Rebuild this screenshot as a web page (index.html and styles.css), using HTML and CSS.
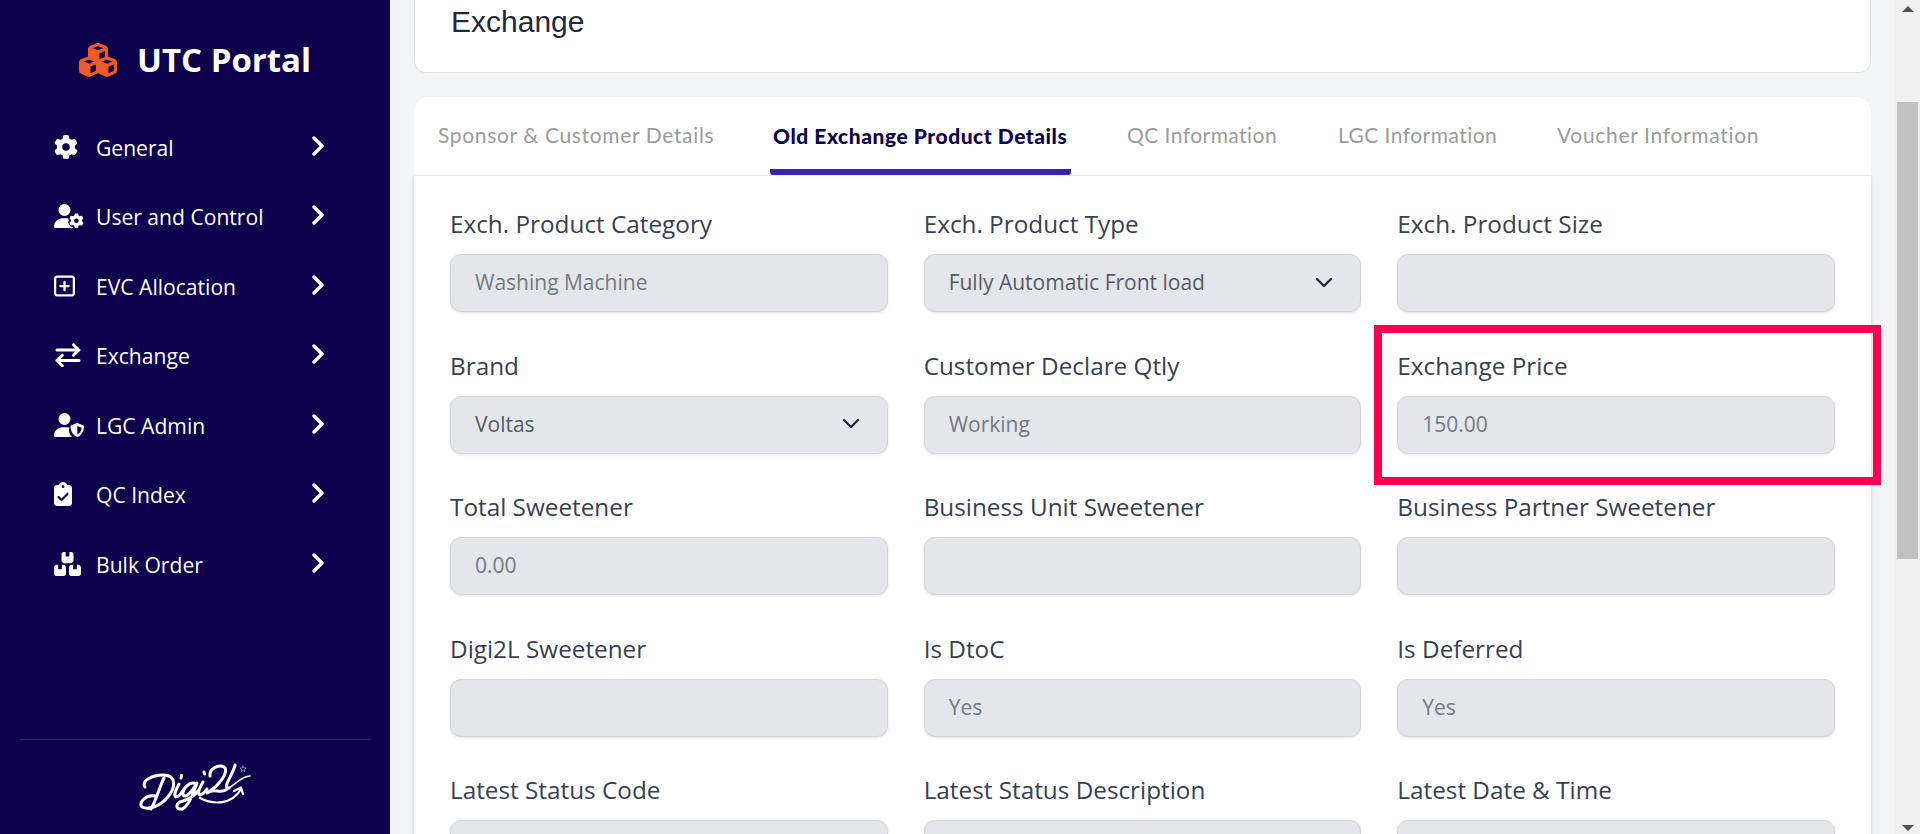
FILE: index.html
```html
<!DOCTYPE html>
<html lang="en">
<head>
<meta charset="utf-8">
<title>UTC Portal</title>
<link rel="stylesheet" href="styles.css">
</head>
<body>
<div class="app">
  <aside class="sidebar">
    <div class="brand">
      <svg class="brand-icon" viewBox="0 0 576 512"><path fill="#f05a28" fill-rule="evenodd" d="M290.8 48.600l78.400 29.700L288 109.500 206.800 78.300l78.400-29.700c1.800-.7 3.800-.7 5.700 0zM136 92.500V204.700c-1.300 .4-2.600 .8-3.900 1.300l-96 36.400C14.400 250.600 0 271.500 0 294.700V413.900c0 22.200 13.100 42.300 33.500 51.300l96 42.200c14.400 6.300 30.700 6.300 45.100 0L288 457.500l113.500 49.900c14.400 6.300 30.700 6.300 45.100 0l96-42.200c20.300-8.900 33.500-29.100 33.500-51.300V294.700c0-23.300-14.400-44.100-36.100-52.400l-96-36.400c-1.300-.5-2.600-.9-3.900-1.300V92.500c0-23.300-14.400-44.100-36.100-52.400l-96-36.400c-12.800-4.800-26.900-4.800-39.700 0l-96 36.400C150.400 48.400 136 69.300 136 92.500zM392 210.600l-82.400 31.200V152.600L392 121v89.600zM154.800 250.900l78.400 29.700L152 311.700 70.800 280.600l78.400-29.700c1.800-.7 3.800-.7 5.700 0zm18.800 204.400V354.800L256 323.200v95.900l-82.400 36.200zM421.200 250.900c1.800-.7 3.800-.7 5.700 0l78.400 29.700L424 311.700l-81.200-31.100 78.400-29.700zM523.200 421.200l-77.600 34.100V354.800L528 323.200v90.700c0 3.200-1.900 6-4.800 7.300z"/></svg>
      <span class="brand-name">UTC Portal</span>
    </div>
    <nav class="menu">
      <a class="item"><svg class="ico" style="width:24px" viewBox="0 0 512 512"><path d="M495.900 166.600c3.200 8.700 .5 18.400-6.400 24.600l-43.300 39.400c1.100 8.300 1.700 16.800 1.700 25.400s-.6 17.100-1.700 25.400l43.300 39.400c6.900 6.200 9.600 15.900 6.400 24.600c-4.400 11.900-9.700 23.300-15.800 34.300l-4.700 8.100c-6.600 11-14 21.400-22.100 31.200c-5.900 7.200-15.700 9.600-24.500 6.800l-55.700-17.700c-13.400 10.300-28.200 18.900-44 25.400l-12.500 57.100c-2 9.100-9 16.300-18.200 17.800c-13.800 2.300-28 3.500-42.500 3.500s-28.700-1.200-42.500-3.500c-9.200-1.500-16.200-8.700-18.200-17.800l-12.500-57.100c-15.800-6.500-30.600-15.100-44-25.400L83.100 425.900c-8.800 2.800-18.600 .3-24.500-6.800c-8.100-9.800-15.500-20.200-22.100-31.200l-4.700-8.100c-6.100-11-11.400-22.400-15.800-34.300c-3.200-8.700-.5-18.400 6.400-24.600l43.300-39.400C64.600 273.100 64 264.600 64 256s.6-17.100 1.700-25.400L22.400 191.200c-6.900-6.200-9.600-15.900-6.400-24.600c4.400-11.900 9.700-23.300 15.800-34.300l4.700-8.100c6.600-11 14-21.400 22.100-31.200c5.900-7.200 15.700-9.600 24.500-6.800l55.700 17.700c13.400-10.300 28.200-18.900 44-25.400l12.500-57.100c2-9.100 9-16.300 18.200-17.800C227.300 1.200 241.500 0 256 0s28.700 1.200 42.500 3.500c9.200 1.500 16.200 8.700 18.200 17.800l12.500 57.100c15.800 6.500 30.600 15.100 44 25.400l55.700-17.700c8.800-2.800 18.600-.3 24.500 6.800c8.100 9.800 15.500 20.200 22.100 31.200l4.700 8.100c6.100 11 11.400 22.400 15.800 34.300zM256 336a80 80 0 1 0 0-160 80 80 0 1 0 0 160z"/></svg><span>General</span><svg class="chev" viewBox="0 0 12 20"><path d="M2 2l8 8-8 8"/></svg></a>
      <a class="item"><svg class="ico" style="width:30px" viewBox="0 0 640 512"><path d="M224 0a128 128 0 1 1 0 256A128 128 0 1 1 224 0zM178.300 304h91.400c11.800 0 23.400 1.200 34.500 3.300c-2.100 18.500 7.400 35.600 21.800 44.800c-16.600 10.600-26.700 31.600-20 53.300c4 12.900 9.400 25.500 16.400 37.600s15.200 23.100 24.400 33c15.700 16.900 39.600 18.400 57.200 8.700v.9c0 9.200 2.700 18.500 7.900 26.300H29.700C13.300 512 0 498.700 0 482.300C0 383.800 79.800 304 178.300 304z"/><path transform="translate(322 200) scale(.61)" d="M495.900 166.600c3.200 8.700 .5 18.400-6.400 24.600l-43.300 39.400c1.100 8.300 1.700 16.800 1.700 25.400s-.6 17.100-1.700 25.400l43.300 39.400c6.900 6.200 9.600 15.900 6.400 24.600c-4.400 11.900-9.700 23.300-15.800 34.300l-4.700 8.100c-6.600 11-14 21.400-22.100 31.200c-5.900 7.200-15.700 9.600-24.500 6.800l-55.700-17.700c-13.400 10.300-28.200 18.900-44 25.400l-12.500 57.100c-2 9.100-9 16.300-18.200 17.800c-13.800 2.300-28 3.500-42.500 3.500s-28.700-1.200-42.500-3.500c-9.200-1.500-16.200-8.700-18.200-17.800l-12.500-57.100c-15.800-6.500-30.600-15.100-44-25.400L83.100 425.900c-8.800 2.800-18.600 .3-24.500-6.800c-8.100-9.800-15.500-20.200-22.100-31.200l-4.700-8.100c-6.100-11-11.400-22.400-15.800-34.300c-3.200-8.700-.5-18.400 6.400-24.600l43.300-39.400C64.600 273.100 64 264.600 64 256s.6-17.100 1.700-25.400L22.400 191.200c-6.900-6.200-9.600-15.900-6.400-24.600c4.400-11.900 9.700-23.300 15.800-34.300l4.700-8.100c6.600-11 14-21.400 22.100-31.200c5.900-7.200 15.700-9.600 24.500-6.800l55.700 17.700c13.400-10.300 28.200-18.900 44-25.400l12.500-57.100c2-9.100 9-16.300 18.200-17.800C227.300 1.200 241.500 0 256 0s28.700 1.200 42.500 3.500c9.200 1.500 16.200 8.700 18.200 17.800l12.500 57.100c15.800 6.500 30.600 15.100 44 25.400l55.700-17.700c8.800-2.800 18.600-.3 24.500 6.800c8.100 9.800 15.500 20.200 22.100 31.200l4.700 8.100c6.100 11 11.400 22.400 15.800 34.300zM256 336a80 80 0 1 0 0-160 80 80 0 1 0 0 160z"/></svg><span>User and Control</span><svg class="chev" viewBox="0 0 12 20"><path d="M2 2l8 8-8 8"/></svg></a>
      <a class="item"><svg class="ico" style="width:21px" viewBox="0 0 448 512"><path fill-rule="evenodd" d="M64 80c-8.800 0-16 7.200-16 16V416c0 8.800 7.200 16 16 16H384c8.800 0 16-7.200 16-16V96c0-8.800-7.200-16-16-16H64zM0 96C0 60.700 28.700 32 64 32H384c35.300 0 64 28.700 64 64V416c0 35.300-28.700 64-64 64H64c-35.300 0-64-28.700-64-64V96zM200 344V280H136c-13.300 0-24-10.700-24-24s10.700-24 24-24h64V168c0-13.300 10.700-24 24-24s24 10.700 24 24v64h64c13.300 0 24 10.700 24 24s-10.700 24-24 24H248v64c0 13.300-10.700 24-24 24s-24-10.700-24-24z"/></svg><span>EVC Allocation</span><svg class="chev" viewBox="0 0 12 20"><path d="M2 2l8 8-8 8"/></svg></a>
      <a class="item"><svg class="ico" style="width:27px" viewBox="0 0 27 24"><path class="line" d="M3 7h22M19.500 1.700L24.800 7l-5.300 5.300M25 17.500H3M8.300 12.200L3 17.500l5.300 5.300"/></svg><span>Exchange</span><svg class="chev" viewBox="0 0 12 20"><path d="M2 2l8 8-8 8"/></svg></a>
      <a class="item"><svg class="ico" style="width:30px" viewBox="0 0 640 512"><path d="M224 0a128 128 0 1 1 0 256A128 128 0 1 1 224 0zM178.300 304h91.400c20.600 0 40.400 3.500 58.800 9.900C323 331 320 349.100 320 368c0 59.500 29.500 112.100 74.800 144H29.700C13.300 512 0 498.700 0 482.300C0 383.800 79.800 304 178.300 304z"/><path fill-rule="evenodd" d="M498 215l122 47c13 5 20 14 20 27c0 86-43 180-128 219c-9 5-19 5-28 0c-85-39-132-133-132-219c0-13 8-22 20-27l120-47c2-1 4-1 6 0zM590 312l-92-36v182c58-30 87-83 92-146z"/></svg><span>LGC Admin</span><svg class="chev" viewBox="0 0 12 20"><path d="M2 2l8 8-8 8"/></svg></a>
      <a class="item"><svg class="ico" style="width:18px" viewBox="0 0 384 512"><path fill-rule="evenodd" d="M192 0c-41.800 0-77.400 26.700-90.500 64H64C28.700 64 0 92.700 0 128V448c0 35.300 28.700 64 64 64H320c35.300 0 64-28.700 64-64V128c0-35.300-28.700-64-64-64H282.500C269.400 26.700 233.800 0 192 0zm0 64a32 32 0 1 1 0 64 32 32 0 1 1 0-64zM305 273L177 401c-9.400 9.400-24.600 9.400-33.900 0L79 337c-9.400-9.400-9.400-24.600 0-33.900s24.600-9.400 33.900 0l47 47L271 239c9.400-9.400 24.600-9.400 33.900 0s9.400 24.600 0 33.900z"/></svg><span>QC Index</span><svg class="chev" viewBox="0 0 12 20"><path d="M2 2l8 8-8 8"/></svg></a>
      <a class="item"><svg class="ico" style="width:27px" viewBox="0 0 576 512"><path d="M248 0H208c-26.500 0-48 21.500-48 48V176c0 35.300 28.700 64 64 64H352c35.300 0 64-28.700 64-64V48c0-26.500-21.500-48-48-48H328V80c0 8.800-7.200 16-16 16H264c-8.800 0-16-7.200-16-16V0zM64 272c-35.300 0-64 28.700-64 64V464c0 26.500 21.500 48 48 48H208c26.500 0 48-21.500 48-48V336c0-35.300-28.700-64-64-64H168v80c0 8.800-7.200 16-16 16H104c-8.800 0-16-7.200-16-16V272H64zM368 512H528c26.500 0 48-21.500 48-48V336c0-35.300-28.700-64-64-64H488v80c0 8.800-7.200 16-16 16H424c-8.800 0-16-7.200-16-16V272H384c-35.300 0-64 28.700-64 64V464c0 26.500 21.500 48 48 48z"/></svg><span>Bulk Order</span><svg class="chev" viewBox="0 0 12 20"><path d="M2 2l8 8-8 8"/></svg></a>
    </nav>
    <div class="side-foot">
      <svg class="logo" viewBox="0 0 114 50" fill="none" stroke="#fff" stroke-width="3" stroke-linecap="round" stroke-linejoin="round">
        <path d="M25 15C20 25 18 35 12 46M6 24C2 18 13 12 24 12C38 12 37 25 28 35C20 44 9 47 3 44C-1 40 7 31 16 33"/>
        <path d="M40 21C37 27 34 32 37 34C40 34 43 29 45 26M42.500 12.500L42 15"/>
        <path d="M57 21C50 17 43 27 44 32C47 36 54 27 58 20C54 32 49 44 43 46C36 47 36 40 44 38C50 36 56 32 59 28"/>
        <path d="M64 19C60 26 58 31 61 32C64 31 66 29 68 26M65 9L65.500 11"/>
        <path d="M71 13C70 6 79 1 85 4C91 8 80 23 68 30C75 24 82 32 88 26M96 2C95 10 82 26 90 25"/>
        <path stroke-width="1.600" d="M90 25C98 20 103 13 111 13"/>
        <path stroke-width="2.200" d="M61 35C74 42 93 42 102 26M95 28L102 24.500L104 31"/>
        <path stroke-width=".7" stroke="#b9b4d0" d="M104 3l.9 1.900 2.100.2-1.600 1.400.5 2.100-1.900-1.100-1.900 1.100.5-2.100-1.600-1.400 2.100-.2z"/>
      </svg>
    </div>
  </aside>

  <main class="content">
    <section class="title-card"><h1>Exchange</h1></section>
    <section class="detail">
      <div class="tabs">
        <a class="tab t1">Sponsor &amp; Customer Details</a>
        <a class="tab t2 active">Old Exchange Product Details</a>
        <a class="tab t3">QC Information</a>
        <a class="tab t4">LGC Information</a>
        <a class="tab t5">Voucher Information</a>
      </div>
      <div class="form">
        <div class="field"><label>Exch. Product Category</label><div class="box">Washing Machine</div></div>
        <div class="field"><label>Exch. Product Type</label><div class="box select">Fully Automatic Front load<svg class="caret" viewBox="0 0 18 11"><path d="M2 2l7 7 7-7"/></svg></div></div>
        <div class="field"><label>Exch. Product Size</label><div class="box"></div></div>
        <div class="field"><label>Brand</label><div class="box select">Voltas<svg class="caret" viewBox="0 0 18 11"><path d="M2 2l7 7 7-7"/></svg></div></div>
        <div class="field"><label>Customer Declare Qtly</label><div class="box">Working</div></div>
        <div class="field marked"><label>Exchange Price</label><div class="box">150.00</div></div>
        <div class="field"><label>Total Sweetener</label><div class="box">0.00</div></div>
        <div class="field"><label>Business Unit Sweetener</label><div class="box"></div></div>
        <div class="field"><label>Business Partner Sweetener</label><div class="box"></div></div>
        <div class="field"><label>Digi2L Sweetener</label><div class="box"></div></div>
        <div class="field"><label>Is DtoC</label><div class="box">Yes</div></div>
        <div class="field"><label>Is Deferred</label><div class="box">Yes</div></div>
        <div class="field"><label>Latest Status Code</label><div class="box"></div></div>
        <div class="field"><label>Latest Status Description</label><div class="box"></div></div>
        <div class="field"><label>Latest Date &amp; Time</label><div class="box"></div></div>
      </div>
    </section>
  </main>

  <div class="scrollbar">
    <svg class="arrow" viewBox="0 0 12 6"><path d="M0 6L6 0l6 6z"/></svg>
    <div class="thumb"></div>
    <svg class="arrow end" viewBox="0 0 12 6"><path d="M0 0h12L6 6z"/></svg>
  </div>
</div>
</body>
</html>
```
FILE: styles.css
```css
*, *::before { box-sizing: border-box; }
body {
  margin: 0;
  height: 834px;
  overflow: hidden;
  background: #f3f4f6;
  font-family: "Open Sans", "Noto Sans", sans-serif;
}
.app { display: flex; height: 834px; overflow: hidden; }

/* Sidebar */
.sidebar {
  width: 390px;
  flex: none;
  display: flex;
  flex-direction: column;
  background: #0d004c;
  color: #fff;
}
.brand { display: flex; align-items: center; height: 112px; padding: 7px 0 0 79px; }
.brand-icon { width: 38px; height: 34px; margin-right: 20px; }
.brand-name { font-size: 33px; font-weight: 700; line-height: 40px; white-space: nowrap; }
.menu { flex: 1; }
.item { display: flex; align-items: center; height: 69.500px; padding: 0 66px 0 54px; }
.item span { margin-left: auto; width: 216px; font-size: 21.100px; line-height: 30px; white-space: nowrap; padding-top: 2px; }
.ico { height: 24px; fill: #fff; }
.line { fill: none; stroke: #fff; stroke-width: 3; stroke-linecap: round; stroke-linejoin: round; }
.chev { width: 12px; height: 20px; margin-bottom: 2px; fill: none; stroke: #fff; stroke-width: 3.500; stroke-linecap: round; stroke-linejoin: round; }
.side-foot { height: 95px; margin: 0 19px 0 20px; border-top: 1px solid #2b1f67; padding: 23px 0 0 119px; }
.logo { width: 114px; height: 50px; display: block; }

/* Content */
.content { flex: 1; padding: 0 24px; }
.title-card {
  height: 73px;
  background: #fff;
  border: 1px solid #dfe1e5;
  border-top: 0;
  border-radius: 0 0 12px 12px;
  padding: 5px 0 0 36px;
}
.title-card h1 { margin: 0; font: 400 30px/34px "Liberation Sans", Arial, sans-serif; color: #1f2937; }
.detail { margin-top: 24px; }
.tabs {
  display: flex;
  height: 78px;
  padding-left: 24px;
  background: #fff;
  border-radius: 15px 15px 0 0;
  font-family: Lato, sans-serif;
}
.tab { height: 78px; line-height: 75px; font-size: 21px; color: #9b9b9b; white-space: nowrap; }
.tab.active { border-bottom: 6px solid #3b20b4; border-radius: 3px; font-weight: 900; color: #0d004c; line-height: 77px; padding-left: 3px; }
.t1 { width: 332px; letter-spacing: .65px; }
.t2 { width: 301px; margin-right: 56px; letter-spacing: .53px; }
.t3 { width: 211px; letter-spacing: .45px; }
.t4 { width: 219px; letter-spacing: .45px; }
.t5 { letter-spacing: .68px; }
.form {
  height: 700px;
  background: #fff;
  border-top: 1px solid #ebebeb;
  box-shadow: 0 1px 4px rgba(0, 0, 0, .14);
  padding: 31px 36px 0;
  display: grid;
  grid-template-columns: repeat(3, 1fr);
  grid-auto-rows: 105px;
  gap: 36.500px 36px;
}
.field { position: relative; }
.field label { display: block; height: 47px; font-size: 24.300px; line-height: 34px; color: #374151; white-space: nowrap; }
.box {
  display: flex;
  align-items: center;
  justify-content: space-between;
  height: 58px;
  padding: 0 27px 2px 24px;
  background: #e5e6ea;
  border: 1px solid #d1d5db;
  border-radius: 11px;
  box-shadow: 0 1px 3px rgba(0, 0, 0, .1);
  font-size: 21px;
  color: #747a84;
}
.select { color: #535c68; }
.caret { width: 18px; height: 11px; fill: none; stroke: #1f2937; stroke-width: 2.300; stroke-linecap: round; stroke-linejoin: round; }
.marked::before {
  content: "";
  position: absolute;
  left: -23px;
  top: -23.500px;
  width: 507px;
  height: 160px;
  border: 8px solid #ff0050;
}

/* Scrollbar */
.scrollbar { width: 25px; background: #f0f0f0; display: flex; flex-direction: column; align-items: center; padding: 6px 0 3px; }
.arrow { width: 12px; height: 6px; fill: #505050; flex: none; }
.thumb { width: 21px; height: 457px; background: #c1c1c1; margin-top: 90px; }
.end { margin-top: auto; }
```
